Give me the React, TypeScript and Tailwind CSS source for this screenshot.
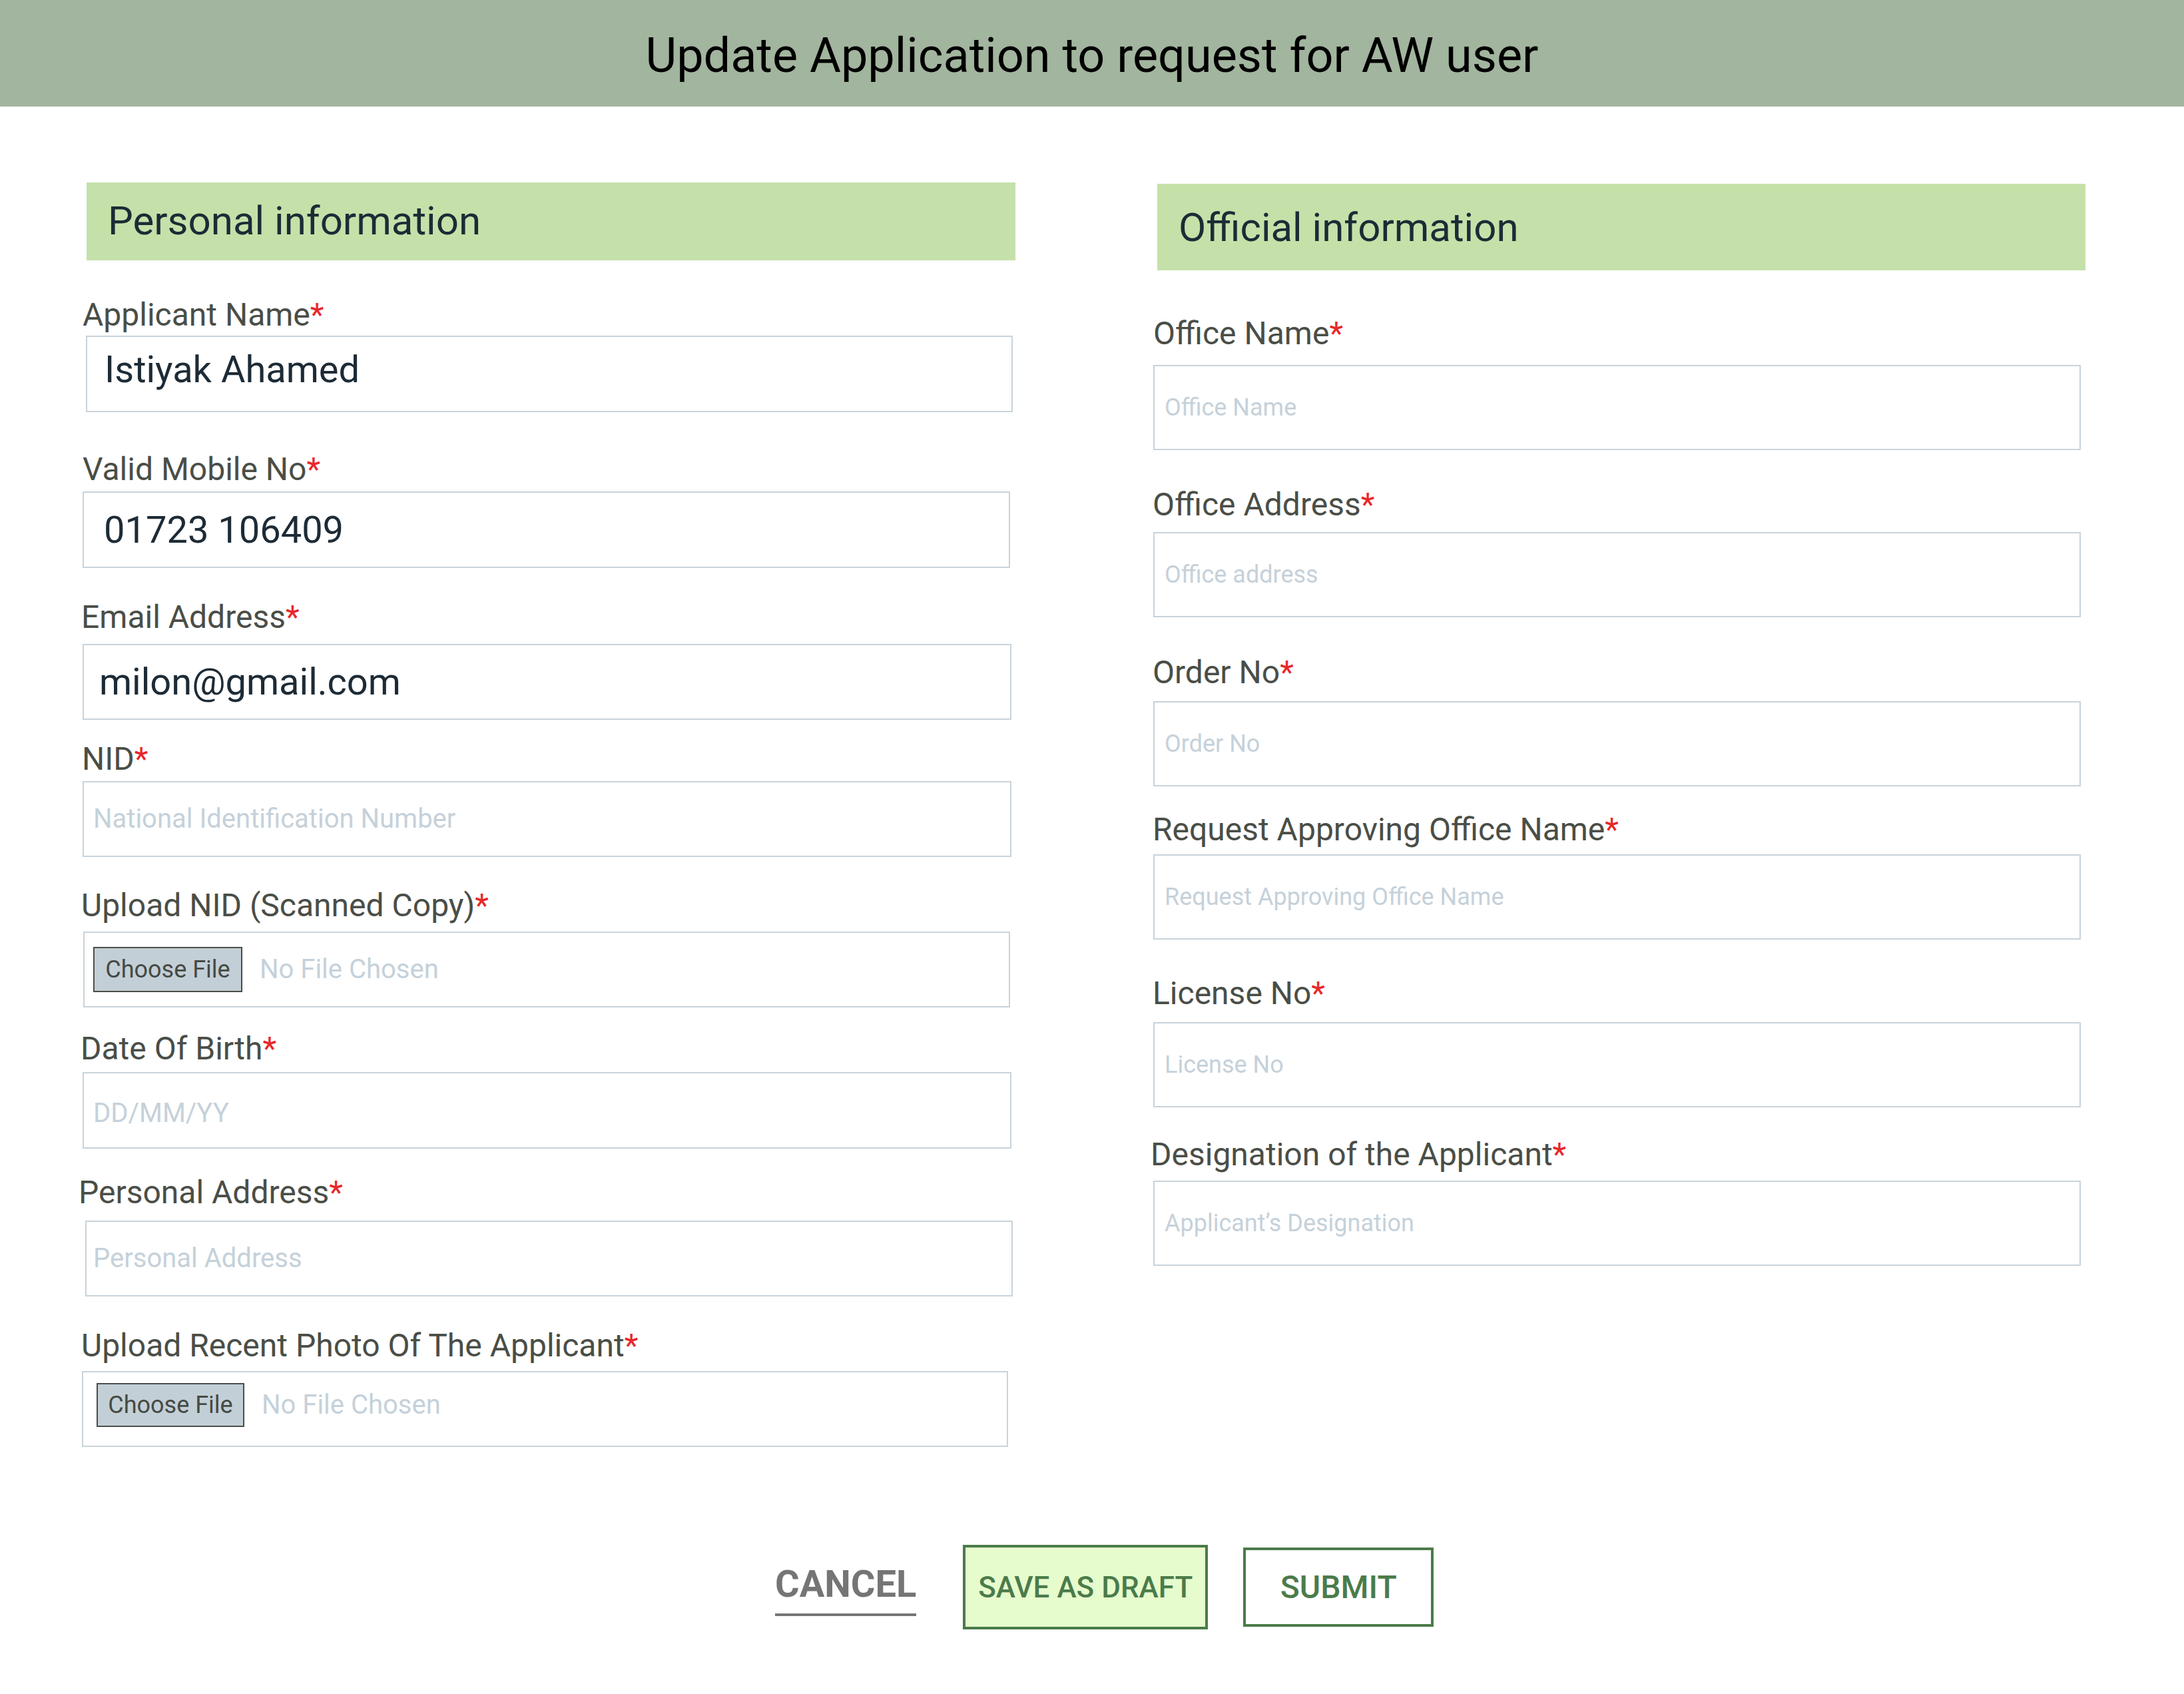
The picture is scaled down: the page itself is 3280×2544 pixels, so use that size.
import React from "react";

function Label({ text, cls }: { text: string; cls: string }) {
  return (
    <div className={"text-[48px] leading-none text-[#4a4e47] whitespace-nowrap " + cls}>
      {text}
      <span className="text-[#e8272a]">*</span>
    </div>
  );
}

function Box({ cls, children }: { cls: string; children?: React.ReactNode }) {
  return <div className={"flex items-center border-2 border-[#c8d3da] bg-white " + cls}>{children}</div>;
}

function Value({ text }: { text: string }) {
  return <span className="text-[56px] leading-none text-[#1d2b36] whitespace-nowrap">{text}</span>;
}

function PH({ text, cls }: { text: string; cls: string }) {
  return <span className={"leading-none text-[#c5d1da] whitespace-nowrap " + cls}>{text}</span>;
}

function FileRow({ cls }: { cls: string }) {
  return (
    <>
      <div className={"flex items-center justify-center border-2 border-[#4a4e47] bg-[#c3cfd7] text-[36px] leading-none text-[#454a44] " + cls}>
        Choose File
      </div>
      <span className="ml-[26px] text-[40px] leading-none text-[#c5d1da] whitespace-nowrap">No File Chosen</span>
    </>
  );
}

export default function App() {
  return (
    <div className="min-h-[2544px] w-[3280px] bg-white font-['Roboto',sans-serif]">
      <div className="h-[160px] bg-[#a2b59e] pt-[48px] text-center">
        <span className="text-[72px] leading-none text-black whitespace-nowrap">Update Application to request for AW user</span>
      </div>

      <div className="flex pl-[116px]">
        {/* Left column */}
        <div className="flex w-[1610px] flex-col items-start">
          <div className="ml-[14px] mt-[114px] h-[117px] w-[1395px] bg-[#c5e1a9] pl-[32px] pt-[28px]">
            <span className="text-[60px] leading-none text-[#1d2b36]">Personal information</span>
          </div>

          <Label text="Applicant Name" cls="ml-[8px] mt-[58px]" />
          <Box cls="ml-[13px] mt-[7px] h-[115px] w-[1392px] pl-[26px] pb-[14px]">
            <Value text="Istiyak Ahamed" />
          </Box>

          <Label text="Valid Mobile No" cls="ml-[8px] mt-[62px]" />
          <Box cls="ml-[8px] mt-[9px] h-[115px] w-[1393px] pl-[30px]">
            <Value text="01723 106409" />
          </Box>

          <Label text="Email Address" cls="ml-[6px] mt-[50px]" />
          <Box cls="ml-[8px] mt-[16px] h-[114px] w-[1395px] pl-[23px]">
            <Value text="milon@gmail.com" />
          </Box>

          <Label text="NID" cls="ml-[7px] mt-[35px]" />
          <Box cls="ml-[8px] mt-[9px] h-[114px] w-[1395px] pl-[14px]">
            <PH text="National Identification Number" cls="text-[40px]" />
          </Box>

          <Label text="Upload NID (Scanned Copy)" cls="ml-[6px] mt-[49px]" />
          <Box cls="ml-[9px] mt-[15px] h-[114px] w-[1392px] pl-[13px]">
            <FileRow cls="h-[68px] w-[224px]" />
          </Box>

          <Label text="Date Of Birth" cls="ml-[5px] mt-[38px]" />
          <Box cls="ml-[8px] mt-[11px] h-[115px] w-[1395px] pl-[14px] pt-[8px]">
            <PH text="DD/MM/YY" cls="text-[40px]" />
          </Box>

          <Label text="Personal Address" cls="ml-[2px] mt-[42px]" />
          <Box cls="ml-[12px] mt-[18px] h-[114px] w-[1393px] pl-[10px]">
            <PH text="Personal Address" cls="text-[40px]" />
          </Box>

          <Label text="Upload Recent Photo Of The Applicant" cls="ml-[6px] mt-[50px]" />
          <Box cls="ml-[7px] mt-[14px] h-[114px] w-[1391px] pl-[20px] pb-[12px]">
            <FileRow cls="h-[66px] w-[222px]" />
          </Box>
        </div>

        {/* Right column */}
        <div className="flex w-[1420px] flex-col items-start">
          <div className="ml-[12px] mt-[116px] h-[130px] w-[1394px] bg-[#c5e1a9] pl-[32px] pt-[36px]">
            <span className="text-[60px] leading-none text-[#1d2b36]">Official information</span>
          </div>

          <Label text="Office Name" cls="ml-[6px] mt-[71px]" />
          <Box cls="ml-[6px] mt-[23px] h-[128px] w-[1393px] pl-[15px]">
            <PH text="Office Name" cls="text-[36px]" />
          </Box>

          <Label text="Office Address" cls="ml-[5px] mt-[58px]" />
          <Box cls="ml-[6px] mt-[17px] h-[128px] w-[1393px] pl-[15px]">
            <PH text="Office address" cls="text-[36px]" />
          </Box>

          <Label text="Order No" cls="ml-[5px] mt-[59px]" />
          <Box cls="ml-[6px] mt-[19px] h-[128px] w-[1393px] pl-[15px]">
            <PH text="Order No" cls="text-[36px]" />
          </Box>

          <Label text="Request Approving Office Name" cls="ml-[5px] mt-[41px]" />
          <Box cls="ml-[6px] mt-[13px] h-[128px] w-[1393px] pl-[15px]">
            <PH text="Request Approving Office Name" cls="text-[36px]" />
          </Box>

          <Label text="License No" cls="ml-[5px] mt-[57px]" />
          <Box cls="ml-[6px] mt-[19px] h-[128px] w-[1393px] pl-[15px]">
            <PH text="License No" cls="text-[36px]" />
          </Box>

          <Label text="Designation of the Applicant" cls="ml-[2px] mt-[47px]" />
          <Box cls="ml-[6px] mt-[15px] h-[128px] w-[1393px] pl-[15px]">
            <PH text={"Applicant\u2019s Designation"} cls="text-[36px]" />
          </Box>
        </div>
      </div>

      {/* Action buttons */}
      <div className="mt-[147px] flex items-start pl-[1164px]">
        <div className="mt-[31px] border-b-[4px] border-[#757575] pb-[16px]">
          <span className="block text-[56px] font-bold leading-none text-[#757575]">CANCEL</span>
        </div>
        <div className="ml-[70px] flex h-[127px] w-[368px] items-center justify-center border-4 border-[#4b7b4a] bg-[#e6fccd]">
          <span className="text-[44px] font-medium leading-none text-[#4b7b4a]">SAVE AS DRAFT</span>
        </div>
        <div className="ml-[53px] mt-[4px] flex h-[119px] w-[286px] items-center justify-center border-4 border-[#4b7b4a] bg-white">
          <span className="text-[48px] font-medium leading-none text-[#4b7b4a]">SUBMIT</span>
        </div>
      </div>
    </div>
  );
}
